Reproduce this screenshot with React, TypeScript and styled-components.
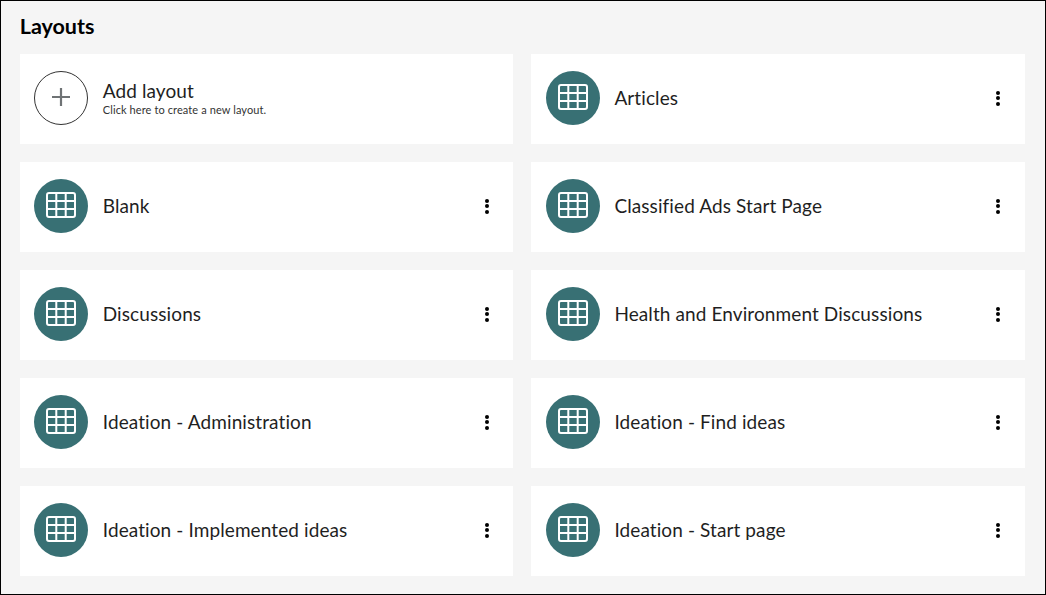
import React from 'react';
import styled, { createGlobalStyle } from 'styled-components';

const GlobalStyle = createGlobalStyle`
  html, body {
    margin: 0;
    padding: 0;
  }

  body {
    font-family: 'Lato', 'Liberation Sans', sans-serif;
    background: #f5f5f5;
  }
`;

const Page = styled.div`
  box-sizing: border-box;
  width: 1046px;
  height: 595px;
  padding: 10px 20px 0 18.75px;
  background: #f5f5f5;
  border: 1px solid #000;
  overflow: hidden;
`;

const Title = styled.h1`
  margin: 0 0 12px;
  height: 31px;
  font-size: 21.5px;
  line-height: 31px;
  font-weight: 700;
  color: #000;
`;

const Grid = styled.div`
  display: grid;
  grid-template-columns: 1fr 1fr;
  grid-auto-rows: 90px;
  column-gap: 18px;
  row-gap: 18px;
`;

const Card = styled.div`
  box-sizing: border-box;
  display: flex;
  align-items: center;
  padding: 0 14px 2px 14.25px;
  background: #fff;
`;

const Avatar = styled.div<{ $outlined?: boolean }>`
  box-sizing: border-box;
  flex: none;
  display: flex;
  align-items: center;
  justify-content: center;
  width: 54px;
  height: 54px;
  margin-right: 14.75px;
  border-radius: 50%;
  color: ${p => (p.$outlined ? '#6f7375' : '#fff')};
  background: ${p => (p.$outlined ? '#fff' : '#387074')};
  border: ${p => (p.$outlined ? '1px solid #333' : 'none')};

  svg {
    margin-bottom: 3px;
  }
`;

const Body = styled.div`
  flex: 1;
  min-width: 0;
`;

const Name = styled.div`
  font-size: 19px;
  line-height: 24px;
  letter-spacing: 0.1px;
  color: #1f1f1f;
`;

const Hint = styled.div`
  margin: 1px 0 2px;
  font-size: 11px;
  line-height: 12px;
  letter-spacing: 0.1px;
  color: #333;
`;

const MenuButton = styled.button`
  flex: none;
  display: flex;
  flex-direction: column;
  align-items: center;
  gap: 1.5px;
  width: 8px;
  margin-right: 8.75px;
  padding: 0;
  border: 0;
  background: none;
`;

const Dot = styled.span`
  width: 4px;
  height: 4px;
  border-radius: 50%;
  background: #000;
`;

const GridIcon = () => (
  <svg width="30" height="26" viewBox="0 0 30 26" fill="none" stroke="currentColor" strokeWidth="2">
    <rect x="1" y="1" width="28" height="24" rx="2" />
    <path d="M10.3 1v24M19.7 1v24M1 9h28M1 17h28" />
  </svg>
);

const PlusIcon = () => (
  <svg width="18" height="18" viewBox="0 0 18 18" stroke="currentColor" strokeWidth="2.2">
    <path d="M9 0v18M0 9h18" />
  </svg>
);

const layouts = [
  'Articles',
  'Blank',
  'Classified Ads Start Page',
  'Discussions',
  'Health and Environment Discussions',
  'Ideation - Administration',
  'Ideation - Find ideas',
  'Ideation - Implemented ideas',
  'Ideation - Start page',
];

export default function App() {
  return (
    <>
      <GlobalStyle />
      <Page>
        <Title>Layouts</Title>
        <Grid>
          <Card>
            <Avatar $outlined>
              <PlusIcon />
            </Avatar>
            <Body>
              <Name>Add layout</Name>
              <Hint>Click here to create a new layout.</Hint>
            </Body>
          </Card>
          {layouts.map(name => (
            <Card key={name}>
              <Avatar>
                <GridIcon />
              </Avatar>
              <Body>
                <Name>{name}</Name>
              </Body>
              <MenuButton aria-label="More">
                <Dot />
                <Dot />
                <Dot />
              </MenuButton>
            </Card>
          ))}
        </Grid>
      </Page>
    </>
  );
}
